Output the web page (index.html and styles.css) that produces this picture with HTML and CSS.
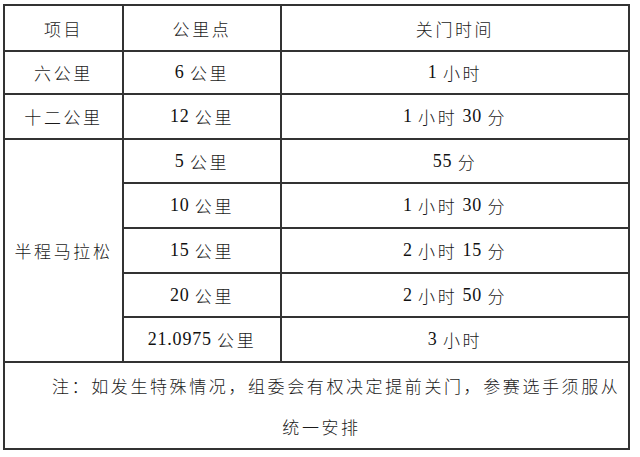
FILE: index.html
```html
<!DOCTYPE html>
<html lang="zh-CN">
<head>
<meta charset="utf-8">
<title>关门时间</title>
<link rel="stylesheet" href="styles.css">
</head>
<body>
<div class="sheet">
  <div class="cell">项目</div>
  <div class="cell">公里点</div>
  <div class="cell">关门时间</div>

  <div class="cell">六公里</div>
  <div class="cell"><span class="num">6 </span>公里</div>
  <div class="cell"><span class="num">1 </span>小时</div>

  <div class="cell">十二公里</div>
  <div class="cell"><span class="num">12 </span>公里</div>
  <div class="cell"><span class="num">1 </span>小时<span class="num"> 30 </span>分</div>

  <div class="cell span5">半程马拉松</div>
  <div class="cell"><span class="num">5 </span>公里</div>
  <div class="cell"><span class="num">55 </span>分</div>
  <div class="cell"><span class="num">10 </span>公里</div>
  <div class="cell"><span class="num">1 </span>小时<span class="num"> 30 </span>分</div>
  <div class="cell"><span class="num">15 </span>公里</div>
  <div class="cell"><span class="num">2 </span>小时<span class="num"> 15 </span>分</div>
  <div class="cell"><span class="num">20 </span>公里</div>
  <div class="cell"><span class="num">2 </span>小时<span class="num"> 50 </span>分</div>
  <div class="cell"><span class="num">21.0975 </span>公里</div>
  <div class="cell"><span class="num">3 </span>小时</div>

  <div class="cell note">
    <div class="note-line first">注：如发生特殊情况，组委会有权决定提前关门，参赛选手须服从</div>
    <div class="note-line second">统一安排</div>
  </div>
</div>
</body>
</html>
```
FILE: styles.css
```css
html, body {
  margin: 0;
  padding: 0;
  background: #ffffff;
}

body {
  padding: 4px 0 0 3px;
}

.sheet {
  display: grid;
  width: 627px;
  box-sizing: border-box;
  grid-template-columns: 117px 156px 346px;
  grid-template-rows: 44px 41px 43px 42px 43px 43px 42px 43px 85px;
  gap: 2px;
  padding: 2px;
  background: #333333;
  font-family: "Noto Sans CJK SC", sans-serif;
  font-weight: 300;
  font-size: 17px;
  letter-spacing: 2.6px;
  color: #1a1a1a;
}

.cell {
  background: #ffffff;
  display: flex;
  align-items: center;
  justify-content: center;
  white-space: pre;
}

.num {
  font-family: "Liberation Serif", serif;
  font-weight: 400;
  font-size: 18px;
  letter-spacing: 0.8px;
  color: #111111;
}

.span5 {
  grid-row: span 5;
}

.note {
  grid-column: 1 / -1;
  display: flex;
  flex-direction: column;
  align-items: stretch;
  justify-content: center;
}

.note-line {
  line-height: 41px;
}

.note-line.first {
  padding-left: 47px;
  text-align: left;
}

.note-line.second {
  text-align: center;
  padding-left: 10px;
}
```
